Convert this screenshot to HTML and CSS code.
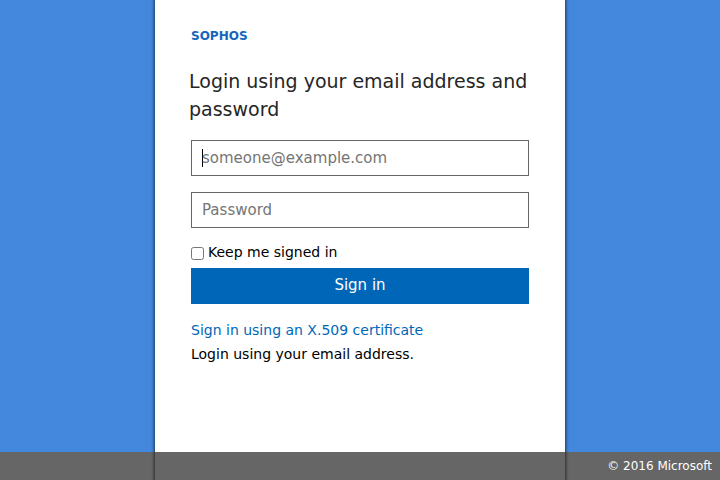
FILE: index.html
```html
<!DOCTYPE html>
<html lang="en">
<head>
<meta charset="utf-8">
<meta name="viewport" content="width=device-width, initial-scale=1">
<title>Sign In</title>
<link rel="stylesheet" href="styles.css">
</head>
<body>
<div class="page">
  <div class="backdrop"></div>
  <main class="panel">
    <div class="logo">SOPHOS</div>
    <h1 class="title">Login using your email address and password</h1>
    <form class="form">
      <input class="field field-active" type="email" aria-label="Email" placeholder="someone@example.com">
      <input class="field" type="password" aria-label="Password" placeholder="Password">
      <div class="keep">
        <input class="keep-box" type="checkbox" id="keep">
        <label for="keep">Keep me signed in</label>
      </div>
      <button class="submit" type="submit">Sign in</button>
    </form>
    <div class="help">
      <a class="link" href="#">Sign in using an X.509 certificate</a>
      <p class="note">Login using your email address.</p>
    </div>
  </main>
  <footer class="footer">© 2016 Microsoft</footer>
</div>
</body>
</html>
```

FILE: styles.css
```css
* {
  box-sizing: border-box;
}

body {
  margin: 0;
  background: #fff;
  color: #000;
  font: 14px/20px "DejaVu Sans", sans-serif;
}

.page {
  display: grid;
  grid-template-rows: 1fr 28px;
  min-height: 100vh;
}

.backdrop {
  grid-area: 1 / 1;
  background: #4488dd;
}

.panel {
  grid-area: 1 / 1 / 3 / 2;
  justify-self: center;
  width: 100%;
  max-width: 410px;
  padding: 26px 36px 60px;
  background: #fff;
  box-shadow: 0 0 3px 1px rgba(0, 0, 0, 0.6);
}

.logo {
  color: #1466bd;
  font-size: 12px;
  font-weight: 700;
}

.title {
  margin: 21px -2px 17px;
  color: #262626;
  font-size: 19px;
  font-weight: 400;
  line-height: 28px;
}

.form {
  display: flex;
  flex-direction: column;
}

.field {
  height: 36px;
  margin: 0 0 16px;
  padding: 0 10px;
  border: 1px solid #666;
  border-radius: 0;
  outline: 0;
  background: #fff;
  font: 15px "DejaVu Sans", sans-serif;
}

/* Text cursor at the start of the empty field */
.field-active {
  background: linear-gradient(#000, #000) 10px 8px / 1px 18px no-repeat #fff;
}

.keep {
  display: flex;
  align-items: center;
  gap: 4px;
  height: 16px;
  margin-bottom: 8px;
}

.keep-box {
  width: 13px;
  height: 13px;
  margin: 2px 0 0;
}

.submit {
  height: 36px;
  padding: 0 0 2px;
  border: 0;
  background: #0067b8;
  color: #fff;
  font: 15px "DejaVu Sans", sans-serif;
}

.help {
  margin-top: 16px;
}

.link {
  color: #0067b8;
  text-decoration: none;
}

.note {
  margin: 4px 0 0;
}

.footer {
  z-index: 1;
  grid-area: 2 / 1;
  padding: 0 8px;
  background: rgba(0, 0, 0, 0.6);
  color: #fff;
  font-size: 12px;
  line-height: 28px;
  text-align: right;
}
```
